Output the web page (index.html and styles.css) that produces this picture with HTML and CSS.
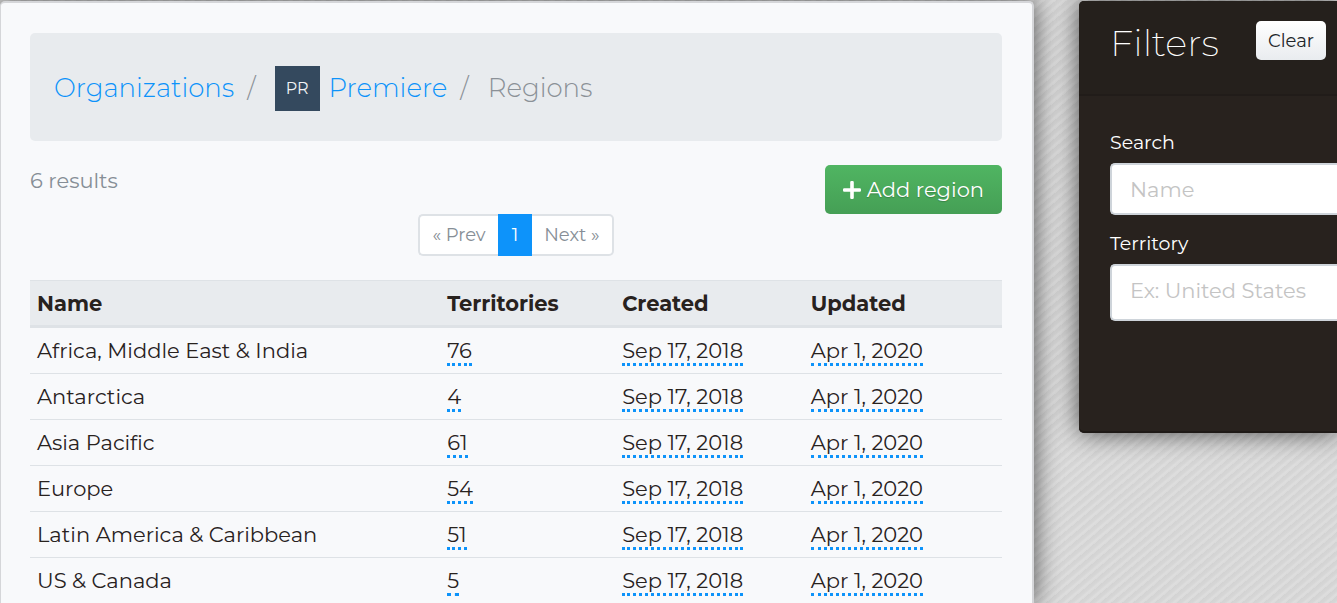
FILE: index.html
```html
<!DOCTYPE html>
<html lang="en">
<head>
<meta charset="utf-8">
<title>Regions</title>
<link rel="stylesheet" href="styles.css">
</head>
<body>
<div class="layout">
  <main class="panel">
    <nav class="breadcrumb" aria-label="Breadcrumb">
      <a href="#">Organizations</a>
      <span class="slash">/</span>
      <span class="avatar">PR</span>
      <a href="#">Premiere</a>
      <span class="slash">/</span>
      <span class="current">Regions</span>
    </nav>
    <div class="toolbar">
      <span class="results">6 results</span>
      <button class="add" type="button">
        <svg class="plus" viewBox="0 0 18 18" aria-hidden="true"><path d="M7.2 1.2Q7.2 0 8.4 0H9.6Q10.8 0 10.8 1.2V7.2H16.8Q18 7.2 18 8.4V9.6Q18 10.8 16.8 10.8H10.8V16.8Q10.8 18 9.6 18H8.4Q7.2 18 7.2 16.8V10.8H1.2Q0 10.8 0 9.6V8.4Q0 7.2 1.2 7.2H7.2Z"/></svg>
        Add region
      </button>
    </div>
    <nav class="pagination" aria-label="Pages">
      <a class="prev" href="#">« Prev</a>
      <a class="page" href="#" aria-current="page">1</a>
      <a class="next" href="#">Next »</a>
    </nav>
    <table class="regions">
      <colgroup><col class="col-name"><col class="col-territories"><col class="col-created"><col class="col-updated"></colgroup>
      <thead>
        <tr><th>Name</th><th>Territories</th><th>Created</th><th>Updated</th></tr>
      </thead>
      <tbody>
        <tr><td>Africa, Middle East &amp; India</td><td><span class="tip">76</span></td><td><span class="tip">Sep 17, 2018</span></td><td><span class="tip">Apr 1, 2020</span></td></tr>
        <tr><td>Antarctica</td><td><span class="tip">4</span></td><td><span class="tip">Sep 17, 2018</span></td><td><span class="tip">Apr 1, 2020</span></td></tr>
        <tr><td>Asia Pacific</td><td><span class="tip">61</span></td><td><span class="tip">Sep 17, 2018</span></td><td><span class="tip">Apr 1, 2020</span></td></tr>
        <tr><td>Europe</td><td><span class="tip">54</span></td><td><span class="tip">Sep 17, 2018</span></td><td><span class="tip">Apr 1, 2020</span></td></tr>
        <tr><td>Latin America &amp; Caribbean</td><td><span class="tip">51</span></td><td><span class="tip">Sep 17, 2018</span></td><td><span class="tip">Apr 1, 2020</span></td></tr>
        <tr><td>US &amp; Canada</td><td><span class="tip">5</span></td><td><span class="tip">Sep 17, 2018</span></td><td><span class="tip">Apr 1, 2020</span></td></tr>
      </tbody>
    </table>
  </main>
  <aside class="filters">
    <header class="filters-head">
      <h2>Filters</h2>
      <button class="clear" type="button">Clear</button>
    </header>
    <form class="filters-body">
      <label for="search">Search</label>
      <input id="search" type="text" placeholder="Name">
      <label for="territory">Territory</label>
      <input id="territory" class="tall" type="text" placeholder="Ex: United States">
    </form>
  </aside>
</div>
</body>
</html>
```
FILE: styles.css
```css
* { box-sizing: border-box; }

body {
  margin: 0;
  font-family: Montserrat, Inter, "Open Sans", sans-serif;
  font-size: 21px;
  font-weight: 400;
  line-height: 32px;
  color: #28221e;
  background: repeating-linear-gradient(140deg, #d3d3d3 0, #d6d6d6 3px, #dedede 5px, #dadada 7px);
}

a { color: #0d93fa; text-decoration: none; }
button, input { font: inherit; }

.layout {
  display: flex;
  align-items: flex-start;
  gap: 45px;
  height: 100vh;
  padding-top: 1px;
  overflow: hidden;
}

.panel {
  flex: 1;
  min-width: 0;
  min-height: 100%;
  padding: 30px 30px 0 29px;
  background: #f8f9fb;
  border: solid #d5d6d9;
  border-width: 2px 2px 0 1px;
  border-radius: 5px 5px 0 0;
  box-shadow: 0 0 26px rgba(0, 0, 0, .65);
}

.breadcrumb {
  display: flex;
  align-items: center;
  height: 108px;
  padding: 2px 24px 0;
  background: #e8ebee;
  border-radius: 5px;
  font-size: 26px;
  font-weight: 300;
  color: #8b9197;
}
.slash { margin: 0 19px 0 13px; }
.avatar {
  width: 45px;
  margin-right: 9px;
  background: #34495e;
  color: #f1f3f5;
  font-size: 16px;
  font-weight: 400;
  line-height: 45px;
  text-align: center;
}

.toolbar {
  display: flex;
  justify-content: space-between;
  align-items: flex-start;
  margin-top: 24px;
}
.results { color: #868e96; }
.add {
  display: flex;
  align-items: center;
  gap: 6px;
  height: 49px;
  padding: 0 18px;
  border: 0;
  border-radius: 5px;
  background: linear-gradient(#50b562, #459f55);
  color: #fff;
  text-shadow: 0 1px 1px rgba(0, 0, 0, .2);
}
.plus { width: 18px; height: 18px; fill: currentColor; }

.pagination {
  display: flex;
  justify-content: center;
  margin-bottom: 24px;
  font-size: 18px;
  line-height: 38px;
}
.pagination a {
  padding: 0 12px;
  border: 2px solid #dee2e6;
  background: #fff;
  color: #868e96;
}
.pagination .prev { border-right: 0; border-radius: 5px 0 0 5px; }
.pagination .next { border-left: 0; border-radius: 0 5px 5px 0; }
.pagination .page { border-color: #0d93fa; background: #0d93fa; color: #fff; }

.regions {
  width: 100%;
  table-layout: fixed;
  border-collapse: separate;
  border-spacing: 0;
}
.col-name { width: 42.2%; }
.col-territories { width: 18%; }
.col-created { width: 19.4%; }
.regions th, .regions td { padding: 0 7px; text-align: left; }
.regions th {
  height: 48px;
  padding-top: 2px;
  background: #e8ebee;
  border-top: 1px solid #dee2e6;
  border-bottom: 3px solid #dee2e6;
  font-weight: 700;
}
.regions td { height: 46px; border-bottom: 1px solid #dee2e6; }
.tip { border-bottom: 3px dotted #0d93fa; }

.filters {
  flex: 0 0 258px;
  min-height: 432px;
  background: #28221e;
  border-radius: 5px 0 0 5px;
  box-shadow: 0 0 26px rgba(0, 0, 0, .65), inset 0 -2px 0 #1f1a17;
  color: #fff;
}
.filters-head {
  display: flex;
  justify-content: space-between;
  align-items: flex-start;
  height: 95px;
  padding: 20px 11px 0 31px;
  border-bottom: 2px solid #211c19;
  background: #25201c;
  border-radius: 5px 0 0 0;
}
.filters-head h2 { margin: 0; font-size: 37px; font-weight: 200; line-height: 44px; }
.clear {
  height: 39px;
  padding: 0 12px;
  border: 0;
  border-radius: 5px;
  background: linear-gradient(#fff, #e9ecef);
  color: #212529;
  font-size: 18px;
}
.filters-body { padding: 31px 0 0 31px; }
.filters-body label { display: block; font-size: 19px; height: 36px; }
.filters-body input {
  display: block;
  width: 100%;
  height: 52px;
  margin-bottom: 13px;
  padding: 0 18px;
  border: 2px solid #ced4da;
  border-right: 0;
  border-radius: 5px 0 0 5px;
  background: #fff;
  color: #28221e;
}
.filters-body .tall { height: 57px; padding-bottom: 4px; }
.filters-body input::placeholder { color: #c4c4c4; opacity: 1; }
```
